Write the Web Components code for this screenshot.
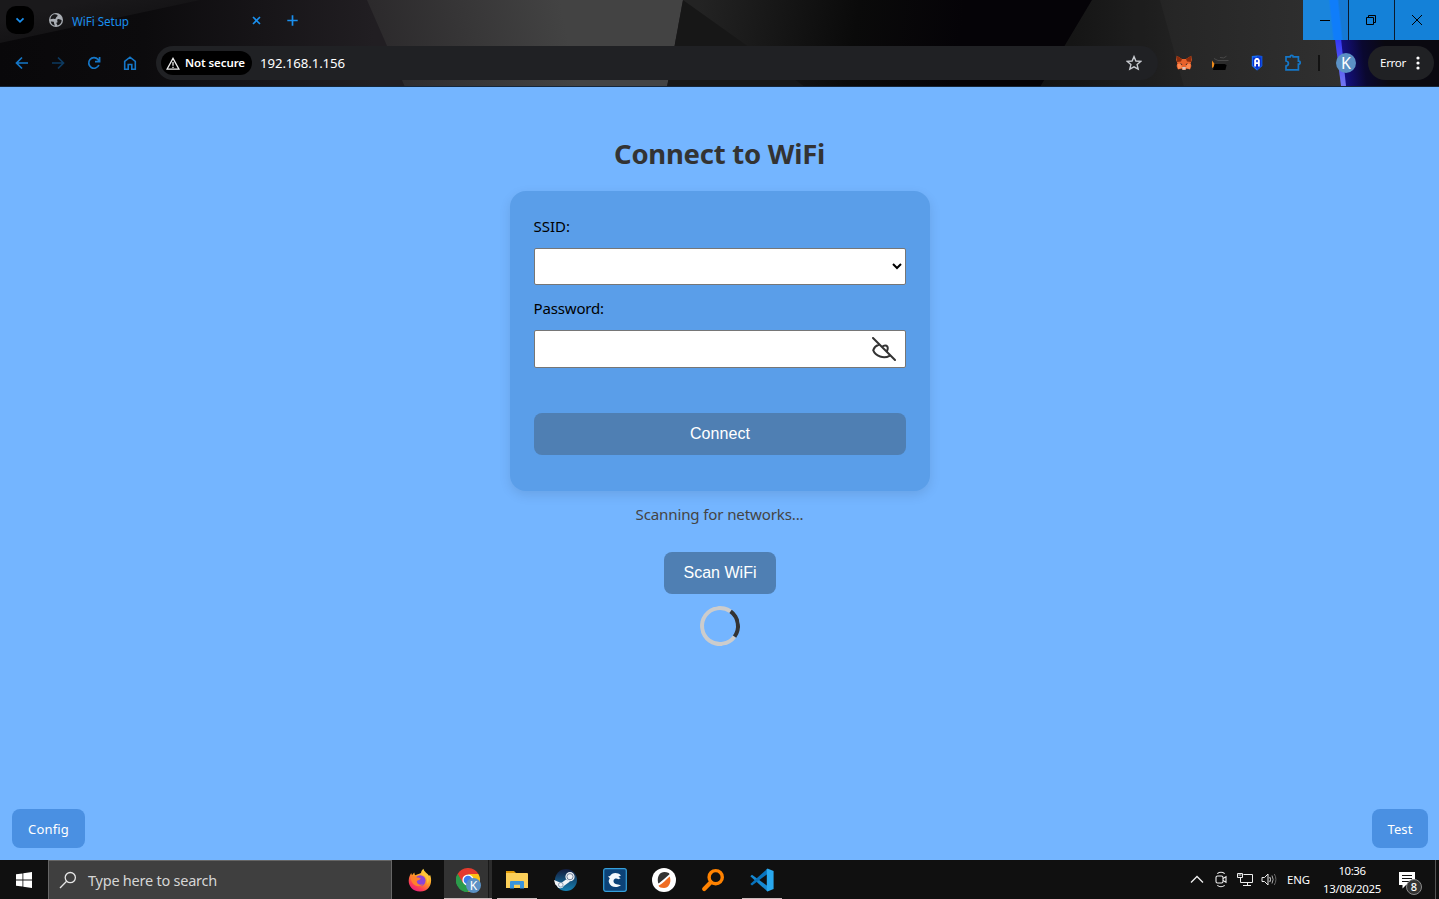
<!DOCTYPE html>
<html lang="en">
<head>
<meta charset="utf-8">
<title>WiFi Setup</title>
<style>
html,body{margin:0;height:100%;overflow:hidden;background:#74b5ff}
body{font-family:"Noto Sans","Open Sans",sans-serif}
</style>
</head>
<body>
<desktop-screen></desktop-screen>
<script>
const define = (name, html, after) => customElements.define(name, class extends HTMLElement {
  connectedCallback() {
    if (this.shadowRoot) return;
    const t = document.createElement('template');
    t.innerHTML = html;
    this.attachShadow({mode: 'open'}).append(t.content.cloneNode(true));
    if (after) after(this);
  }
});

/* Text tracked to a fixed width given by the "w" attribute */
define('fit-text', `<style>:host{display:block;white-space:nowrap;flex:none}span{display:inline-block}</style><span><slot></slot></span>`, el => {
  const w = parseFloat(el.getAttribute('w'));
  const s = el.shadowRoot.querySelector('span');
  const n = el.textContent.length;
  el.style.width = w + 'px';
  const nat = s.getBoundingClientRect().width;
  const ls = (w - nat) / n;
  s.style.letterSpacing = ls.toFixed(3) + 'px';
});

define('theme-art', `<style>:host{display:block}svg{display:block}</style>
<svg width="1439" height="87" viewBox="0 0 1439 87">
<defs>
<linearGradient id="a" x1="0" x2="1"><stop offset="0" stop-color="#09080a"/><stop offset=".1" stop-color="#0c0b0d"/><stop offset=".26" stop-color="#211e22"/></linearGradient>
<linearGradient id="b" gradientUnits="userSpaceOnUse" x1="370" y1="40" x2="560" y2="0"><stop offset="0" stop-color="#2b292b"/><stop offset="1" stop-color="#434343"/></linearGradient>
<linearGradient id="c" gradientUnits="userSpaceOnUse" x1="700" y1="0" x2="960" y2="40"><stop offset="0" stop-color="#232323"/><stop offset=".6" stop-color="#0a0a0a"/><stop offset="1" stop-color="#050307"/></linearGradient>
<linearGradient id="d" gradientUnits="userSpaceOnUse" x1="1040" y1="40" x2="1340" y2="40"><stop offset="0" stop-color="#151515"/><stop offset=".45" stop-color="#262626"/><stop offset="1" stop-color="#303030"/></linearGradient>
<linearGradient id="e" gradientUnits="userSpaceOnUse" x1="1340" y1="50" x2="1385" y2="45"><stop offset="0" stop-color="#15108a"/><stop offset=".5" stop-color="#0a0830"/><stop offset="1" stop-color="#0a0910"/></linearGradient>
<linearGradient id="g" gradientUnits="userSpaceOnUse" x1="100" y1="30" x2="94" y2="0"><stop offset="0" stop-color="#131214"/><stop offset="1" stop-color="#1a191b"/></linearGradient>
<linearGradient id="h" gradientUnits="userSpaceOnUse" x1="0" y1="40" x2="0" y2="87"><stop offset="0" stop-color="#3438f5"/><stop offset="1" stop-color="#7478f2"/></linearGradient>
</defs>
<rect width="1439" height="87" fill="url(#a)"/>
<path d="M0 43L200 0H0z" fill="url(#g)"/>
<path d="M367 0H683L667 87H405z" fill="url(#b)"/>
<path d="M683 0L667 87H820z" fill="#171717"/>
<path d="M683 0L805 87H1100V0z" fill="url(#c)"/>
<path d="M1092 0L1040 87H1344L1332 0z" fill="url(#d)"/>
<path d="M1040 87L1092 0H1160L1184 87z" fill="#000" opacity=".12"/>
<path d="M1332 0L1344 87H1439V0z" fill="url(#e)"/>
<path d="M1330 0H1337L1346 86H1341z" fill="url(#h)"/>
<rect y="86" width="1439" height="1" fill="#15263a"/>
</svg>`);

define('tab-strip', `<style>
:host{display:flex;height:46px;color:#1a8fee}
.l{display:flex;align-items:center;height:40px;flex:1;padding-left:6px}
.chev{width:28px;height:28px;border-radius:10px;background:#000;margin-right:15px}
svg{display:block;flex:none}
fit-text{font-size:11.7px;line-height:16px;margin:1px 0 0 9px}
.w{display:flex;gap:1px;height:40px;background:#0b1a2c}
.w div{width:45px;background:#1481d8}
.w div:first-child{background:linear-gradient(84deg,#1a85dc 60%,#0f7dfa 64%,#0f7dfa 78%,#1579d4 82%)}
.w div:last-child{width:44px}
</style>
<div class="l"><div class="chev"><svg width="28" height="28" fill="none" stroke="#1a8fee" stroke-width="1.8"><path d="M10.5 12.3L14 15.8L17.5 12.3"/></svg></div>
<svg width="14" height="14" viewBox="0 0 14 14"><circle cx="7" cy="7" r="7" fill="#a9adb3"/><path d="M5 1.2C8 1 9.5 2 8.2 3.4C6.5 4 7.5 5.8 5.6 6C4.4 5.3 2.4 6 1.4 6.2C1.6 3.6 3 2 5 1.2zM8.6 6.2C10.5 5.8 11.4 7 12.6 7C12.8 9.6 11 12 8.4 12.6C8.4 11 6.6 10.6 7.6 9.6C9.8 9.4 7.3 7.6 8.6 6.2zM1.8 8.5L4.8 8.8L5.2 11L6 12.6C4 12.4 2.2 11 1.8 8.5z" fill="#19191b"/></svg>
<fit-text w="57">WiFi Setup</fit-text>
<svg width="9" height="9" style="margin-left:122.5px" stroke="#1a8fee" stroke-width="1.6"><path d="M1 1L8 8M8 1L1 8"/></svg>
<svg width="11" height="11" style="margin-left:26px" stroke="#1a8fee" stroke-width="1.7"><path d="M5.5 .3V10.7M.3 5.5H10.7"/></svg></div>
<div class="w"><div><svg width="45" height="40"><path d="M17 20.5H27" stroke="#000"/></svg></div>
<div><svg width="45" height="40" fill="none" stroke="#000"><path d="M17.5 17.5H24.5V24.5H17.5zM19.5 17.5V15.5H26.5V22.5H24.5"/></svg></div>
<div><svg width="44" height="40" stroke="#000"><path d="M17 15L27 25M27 15L17 25"/></svg></div></div>`);

define('nav-toolbar', `<style>
:host{display:flex;height:34px;align-items:center;color:#fff}
svg{display:block;flex:none}
.nav{display:flex;gap:20px;width:142px;padding-left:14px;box-sizing:content-box}
.omni{display:flex;align-items:center;width:1002px;height:34px;border-radius:17px;background:#202124;box-sizing:border-box;padding:0 16px 0 5px}
.chip{display:flex;align-items:center;background:#000;border-radius:12px;height:24px;width:91px;box-sizing:border-box;padding-left:5px;gap:5px;margin-right:8px}
.chip fit-text{font-size:11.5px;font-weight:600;line-height:20px}
.url{font-size:13.2px;line-height:20px;flex:1!important}
.ext{display:flex;align-items:center;margin-left:18px;gap:20px}
.av{width:20px;height:20px;border-radius:50%;background:#5b91c5;font-size:16px;line-height:20px;text-align:center;margin:0 12px 0 16px}
.err{display:flex;align-items:center;width:66px;height:34px;box-sizing:border-box;border-radius:17px;background:#202124;padding-left:12px}
.err fit-text{font-size:11.6px;line-height:16px;margin-bottom:1px}
</style>
<div class="nav">
<svg width="16" height="16" fill="none" stroke="#1577c8" stroke-width="1.7"><path d="M14 8H3M8 2.5L2.5 8L8 13.5"/></svg>
<svg width="16" height="16" fill="none" stroke="#0d3a60" stroke-width="1.7"><path d="M2 8H13M8 2.5L13.5 8L8 13.5"/></svg>
<svg width="16" height="16" fill="none" stroke="#1577c8" stroke-width="1.7"><path d="M12.9 10A5.3 5.3 0 1 1 12 4.4L13.3 6.3M13.6 2V6.6H9"/></svg>
<svg width="16" height="16" fill="none" stroke="#1577c8" stroke-width="1.6"><path d="M2.7 14.2V6.4L8 2.2L13.3 6.4V14.2H9.8V9.5H6.2V14.2z"/></svg>
</div>
<div class="omni"><div class="chip"><svg width="14" height="13" fill="none" stroke="#eee" stroke-width="1.3"><path d="M7 1.4L13 12.2H1zM7 5V8.7M7 9.8V11"/></svg><fit-text w="60">Not secure</fit-text></div>
<fit-text class="url" w="85">192.168.1.156</fit-text>
<svg width="16" height="16" fill="none" stroke="#c7cacf" stroke-width="1.4"><path d="M8 1.6L9.9 6L14.7 6.4L11.1 9.6L12.2 14.2L8 11.8L3.8 14.2L4.9 9.6L1.3 6.4L6.1 6z"/></svg></div>
<div class="ext">
<svg width="16" height="16"><path d="M.8 .8L6 4H10L15.2 .8L15.8 5L14.6 8.5L15.4 11L14 14.6L10.5 13.6L9.5 15H6.5L5.5 13.6L2 14.6L.6 11L1.4 8.5L.2 5z" fill="#e8622b"/><path d="M.8 .8L6 4L5 6.5L1 7zM15.2 .8L10 4L11 6.5L15 7z" fill="#8d2c0c"/><path d="M1.4 9L5 8.4L6 13L2 14zM14.6 9L11 8.4L10 13L14 14z" fill="#ff8a50"/><path d="M4 8L6.5 9.2L5.4 10zM12 8L9.5 9.2L10.6 10z" fill="#30252a"/><path d="M6.2 12H9.8L9.5 14.7H6.5z" fill="#d4c2bb"/></svg>
<svg width="17" height="16"><path d="M0 5.5L2.6 9L1.6 12L0 13z" fill="#ef8a18"/><path d="M2.6 9H12.6L14.6 10L13.4 15H1L2 11z" fill="#000"/><path d="M2.5 3.5L6 5.5L16 5L13.5 9H4.5z" fill="#2b2b2b"/><path d="M2 3.5L6 5.5H16.5M8 2.5Q12 4 14.5 1.2" stroke="#484848" fill="none"/></svg>
<svg width="16" height="16"><path d="M2.8 1L8 .5L13.2 1V11L8 15.5L2.8 11z" fill="#1a6ff2"/><path d="M8 .5L13.2 1V11L8 15.5z" fill="#0d4fdc"/><path d="M4 2.4H12V10.5L8 14L4 10.5z" fill="#0a2fd0"/><path d="M5.2 11.4V5L6.8 3H9.2L10.8 5V11.4H9V9H7V11.4zM7.2 5V7.2H8.8V5z" fill="#fff" fill-rule="evenodd"/></svg>
<svg width="18" height="18" fill="none" stroke="#1577c8" stroke-width="1.7" style="margin-left:-1px"><path d="M2 2.8H6.2C6.2 .8 9.2 .8 9.2 2.8H14.4V7.2C16.8 7.2 16.8 10.2 14.4 10.2V15.8H2V12C5.2 11.5 5.2 7.5 2 7z"/></svg>
</div>
<svg width="2" height="16" style="margin-left:16px"><path d="M1 0V16" stroke="#0c0c0c" stroke-width="1.6"/></svg>
<div class="av">K</div>
<div class="err"><fit-text w="26">Error</fit-text><svg width="6" height="16" style="margin-left:9px" fill="#fff"><circle cx="3" cy="3" r="1.6"/><circle cx="3" cy="8" r="1.6"/><circle cx="3" cy="13" r="1.6"/></svg></div>`);

define('browser-chrome', `<style>
:host{display:grid;height:87px;overflow:hidden}
:host>*{grid-area:1/1}
</style><theme-art></theme-art><div><tab-strip></tab-strip><nav-toolbar></nav-toolbar></div>`);

define('action-button', `<style>
:host{display:block}
button{all:unset;display:flex;align-items:center;justify-content:center;box-sizing:border-box;width:100%;height:42px;border-radius:8px;background:#4f7fb3;color:#fff;font:16px/18px "Liberation Sans",Arial,sans-serif;padding-left:1px}
:host([corner]) button{height:39px;padding-left:0;background:#4a90e2;font:13px/18px "Noto Sans",sans-serif}
</style><button><slot></slot></button>`);

define('form-field', `<style>
:host{display:block}
.lab{font-size:15px;line-height:22px;color:#000}
.box{display:flex;align-items:center;justify-content:flex-end;box-sizing:border-box;border:1px solid #767676;border-radius:2px;background:#fff;margin-top:11px}
</style><div class="lab"><slot name="label"></slot></div><div class="box"><slot></slot></div>`,
el => { el.shadowRoot.querySelector('.box').style.height = el.getAttribute('box') + 'px'; });

define('wifi-card', `<style>
:host{display:block;box-sizing:border-box;width:420px;height:300px;padding:24px;border-radius:16px;background:#5a9ee9;box-shadow:0 4px 12px rgba(0,0,0,.1)}
form-field+form-field{margin-top:12px}
svg{display:block}
action-button{margin-top:45px}
</style>
<form-field box="37"><fit-text slot="label" w="36.5">SSID:</fit-text><svg width="12" height="10" style="margin:0 2px 2px 0" fill="none" stroke="#000" stroke-width="2"><path d="M2 3L6 7L10 3"/></svg></form-field>
<form-field box="38"><fit-text slot="label" w="70.5">Password:</fit-text><svg width="24" height="24" style="margin-right:9px" fill="none" stroke="#333" stroke-width="2" stroke-linecap="round" stroke-linejoin="round"><path d="M1 1L23 23M17.5 18.8C12 22 3.4 19.5 1.2 13.2C2 10.8 4 8.6 6.7 7.7M10.3 9.8C11.8 8.2 14.5 8.3 15.4 9.6C16 11 15.8 12.5 15 14"/></svg></form-field>
<action-button><fit-text w="60">Connect</fit-text></action-button>`);

define('load-spinner', `<style>:host{display:block;box-sizing:border-box;width:40px;height:40px;border:4px solid #ccc;border-right-color:#333;border-radius:50%;transform:rotate(-9deg)}</style>`);

define('wifi-page', `<style>
:host{display:flex;flex-direction:column;align-items:center;box-sizing:border-box;height:773px;background:#74b5ff;padding-top:47px}
h1{margin:0 0 17px;font-size:27.5px;line-height:40px;font-weight:700;color:#333}
.status{font-size:15.1px;line-height:22px;color:#444;margin:12px 0 27px}
.scan{width:112px;margin-bottom:12px}
footer{display:flex;justify-content:space-between;align-self:stretch;margin-top:auto;padding:0 11px 12px 12px}
</style>
<h1><fit-text w="211">Connect to WiFi</fit-text></h1>
<wifi-card></wifi-card>
<div class="status"><fit-text w="168">Scanning for networks...</fit-text></div>
<action-button class="scan"><fit-text w="73">Scan WiFi</fit-text></action-button>
<load-spinner></load-spinner>
<footer><action-button corner style="width:73px"><fit-text w="41">Config</fit-text></action-button><action-button corner style="width:56px"><fit-text w="25">Test</fit-text></action-button></footer>`);

define('task-bar', `<style>
:host{display:flex;height:39px;background:#101010;color:#fff}
svg{display:block;flex:none}
.start{width:48px;display:flex;align-items:center;justify-content:center}
.search{display:flex;align-items:center;width:344px;box-sizing:border-box;border:1px solid #666;border-bottom:0;background:#3f3f3f;padding-left:10px;color:#d6d6d6;font-size:14.5px;gap:11px;margin-right:3px}
.app{width:49px;display:flex;align-items:center;justify-content:center;height:39px;box-sizing:border-box;flex:none}
.app:not(.active):first-of-type{margin:0}
.run{background:linear-gradient(#c9bcbc,#c9bcbc) 50% 100%/40px 1px no-repeat}
.active{width:48px;background:linear-gradient(#c9bcbc,#c9bcbc) 0 100%/48px 1px no-repeat,linear-gradient(90deg,#333 44px,#181818 44px,#181818 45px,#2b2b2b 45px)}
.ic{display:grid}.ic>*{grid-area:1/1}
.k{place-self:end;width:15px;height:15px;border-radius:50%;background:#5b91c5;font-size:12px;line-height:15px;text-align:center;margin:0 -1px -1px 0}
.tray{display:flex;margin-left:auto;align-items:center}
.tray fit-text{font-size:11.4px}
.clock{display:flex;flex-direction:column;align-items:center;width:58px;margin:0 18px 0 13px;line-height:18px}
.n{display:grid;width:24px;height:24px;margin-right:12px}.n>*{grid-area:1/1}
.b{place-self:end;width:14px;height:14px;border:1px solid #8b8b8b;border-radius:50%;background:#333;font-size:11px;font-weight:500;line-height:14px;text-align:center;margin:0 1px -3px 0}
.end{width:1px;height:39px;background:#555;margin-right:3px}
</style>
<div class="start"><svg width="16" height="16" fill="#fff"><path d="M0 2.3L6.5 1.4V7.6H0zM7.3 1.3L16 0V7.6H7.3zM0 8.4H6.5V14.6L0 13.7zM7.3 8.4H16V16L7.3 14.7z"/></svg></div>
<div class="search"><svg width="18" height="18" fill="none" stroke="#e6e6e6" stroke-width="1.3"><circle cx="11.3" cy="6.6" r="5.1"/><path d="M7.6 10.3L1 17"/></svg><fit-text w="129">Type here to search</fit-text></div>
<div class="app"><svg width="24" height="24" viewBox="0 0 24 24"><defs><linearGradient id="f" x1=".8" y1="0" x2=".2" y2="1"><stop offset="0" stop-color="#ffe345"/><stop offset=".45" stop-color="#ff9a25"/><stop offset=".75" stop-color="#ff4352"/><stop offset="1" stop-color="#e31587"/></linearGradient></defs><path d="M13 5C13 3 14.5 1.5 15.5 .7C16 4 20 5.5 21.2 8L22 6.8C24.5 12 23.4 23.3 12.2 23.6C4 23.6 .5 17.5 .7 12.4C.8 9 2.4 6.5 3.2 5.1L4 7.2L6.2 4.5L7 7.3C9 6.6 10.5 6 13 5z" fill="url(#f)"/><circle cx="12.2" cy="12.6" r="5.4" fill="#8b45d8"/><path d="M2.5 9C5 7 8 8.6 9 9.4C11 9.4 13 10 12.6 10.7C11.5 12.3 8.7 11.8 8.9 14C9.6 17 13 17.2 15.5 16C10 21 3 17 2.5 9z" fill="#ff812c"/><path d="M13.5 6C17 7.5 20 10.5 19.4 16C22 12 21 8 16 4z" fill="#ffc738"/></svg></div>
<div class="app active"><div class="ic"><svg width="24" height="24" viewBox="0 0 24 24"><path d="M12 24V12A12 12 0 0 1 1.6 6A12 12 0 0 0 12 24z" fill="#2c9b4b"/><path d="M12 6H22.4A12 12 0 0 1 12 24L17.2 15z" fill="#fbc116"/><path d="M1.6 6L6.8 15L12 6H22.4A12 12 0 0 0 1.6 6z" fill="#e33b2e"/><path d="M1.6 6L6.8 15L12 18L12 24A12 12 0 0 1 1.6 6z" fill="#2c9b4b"/><circle cx="12" cy="12" r="5.6" fill="#fff"/><circle cx="12" cy="12" r="4.3" fill="#3b7ded"/></svg><span class="k">K</span></div></div>
<div class="app run"><svg width="22" height="19"><path d="M0 1H8L10 3H0z" fill="#e09a08"/><path d="M0 3H21Q22 3 22 4V18H0z" fill="#fbcf59"/><path d="M4 18.5V12Q4 11 5 11H17Q18 11 18 12V18.5H14V14.8H8V18.5H4z" fill="#3a94dd"/></svg></div>
<div class="app"><svg width="24" height="24"><defs><linearGradient id="s" x2="0" y2="1"><stop stop-color="#131b3c"/><stop offset="1" stop-color="#1682b4"/></linearGradient></defs><circle cx="12" cy="12" r="11" fill="url(#s)"/><path d="M0 12L7.2 15L12 11.5L16 13.5L9.8 18A3.7 3.7 0 0 1 2.8 17.7L1.3 16.6z" fill="#f2f4f7"/><circle cx="16" cy="8.7" r="4.6" fill="#f2f4f7"/><circle cx="16" cy="8.7" r="3.1" fill="none" stroke="#6f7f9b"/><circle cx="6.8" cy="16.8" r="2.3" fill="none" stroke="#7d93ac" stroke-width=".9"/></svg></div>
<div class="app"><svg width="24" height="24"><rect x=".7" y=".7" width="22.6" height="22.6" rx="2" fill="#0c4277" stroke="#35a0dc" stroke-width="1.2"/><path d="M18 7.4C14.5 4 9 4.4 7 8L5 8.6L6.8 10.2C5.8 12 5.4 13 6 14.5C7.5 19.5 14 20.3 18 17.2L15 16.4C11.5 16.2 9.8 14.2 10.8 11.8C12 10 14 10.2 15.4 11.2L17.6 10.2L15.4 8.8z" fill="#f5f8fb"/></svg></div>
<div class="app"><svg width="24" height="24"><circle cx="12" cy="12" r="12" fill="#fff"/><path d="M6 14.4C5 8 8 4 12.5 4C15.5 4 17.4 5 17.5 6.2C14 9 11 12 6.6 15.6z" fill="#333"/><path d="M18 9.5C19.5 15 16.5 20 12 20C9 20 7.2 19.2 6.5 17.8C11 14.8 14 12 17.6 8.4z" fill="#ef6c22"/></svg></div>
<div class="app"><svg width="24" height="24" fill="none" stroke="#ff8200"><circle cx="14.7" cy="9.2" r="6.6" stroke-width="3.4"/><path d="M9.8 14.3L3.2 21" stroke-width="4.2" stroke-linecap="round"/></svg></div>
<div class="app run"><svg width="24" height="24"><path d="M.3 8.2L2 6.7L17.5 18V23.5z" fill="#1689d2"/><path d="M.3 16L2 17.4L17.5 6V.7z" fill="#0873bd"/><path d="M17.5 .5L23.6 3V21L17.5 23.6L16.8 22.8V1.2z" fill="#29a8ee"/></svg></div>
<div class="tray">
<svg width="14" height="9" fill="none" stroke="#eee" stroke-width="1.3"><path d="M1 7.5L7 1.5L13 7.5"/></svg>
<svg width="12" height="17" style="margin-left:11px" fill="none" stroke="#eee" stroke-width="1.1"><rect x="1" y="5" width="7" height="7" rx="1.5"/><path d="M8 7.5L11 5.8V11.2L8 9.5M2.3 2.6Q6 0 9.7 2.6M2.3 14.4Q6 17 9.7 14.4"/></svg>
<svg width="17" height="15" style="margin-left:10px" fill="none" stroke="#eee"><path d="M6.5 2.5H15.5V10.5H3.5M10.5 10.5V13.5M6 13.5H14M.5 1.5H5.5V5.5H.5zM3.5 5.5V10.5M1.5 3H4.5"/></svg>
<svg width="17" height="15" style="margin-left:7px" fill="none" stroke="#eee"><path d="M1 5.5H3.5L7 2V13L3.5 9.5H1zM8.8 5Q10.2 7.5 8.8 10"/><path d="M11 3.5Q13.3 7.5 11 11.5" stroke="#aaa"/><path d="M13.3 2Q16.5 7.5 13.3 13" stroke="#666"/></svg>
<fit-text w="23" style="margin-left:9px">ENG</fit-text>
<div class="clock"><fit-text w="27">10:36</fit-text><fit-text w="58">13/08/2025</fit-text></div>
<div class="n"><svg width="24" height="24"><path d="M0 4H16V17H7L3.5 20.5V17H0z" fill="#fff"/><path d="M3 7.5H13M3 10.5H13M3 13.5H10" stroke="#111"/></svg><span class="b">8</span></div>
<div class="end"></div></div>`);

define('desktop-screen', `<style>:host{display:grid;grid-template-rows:87px 773px 39px;grid-template-columns:1439px;height:899px}</style>
<browser-chrome></browser-chrome><wifi-page></wifi-page><task-bar></task-bar>`);
</script>
</body>
</html>
